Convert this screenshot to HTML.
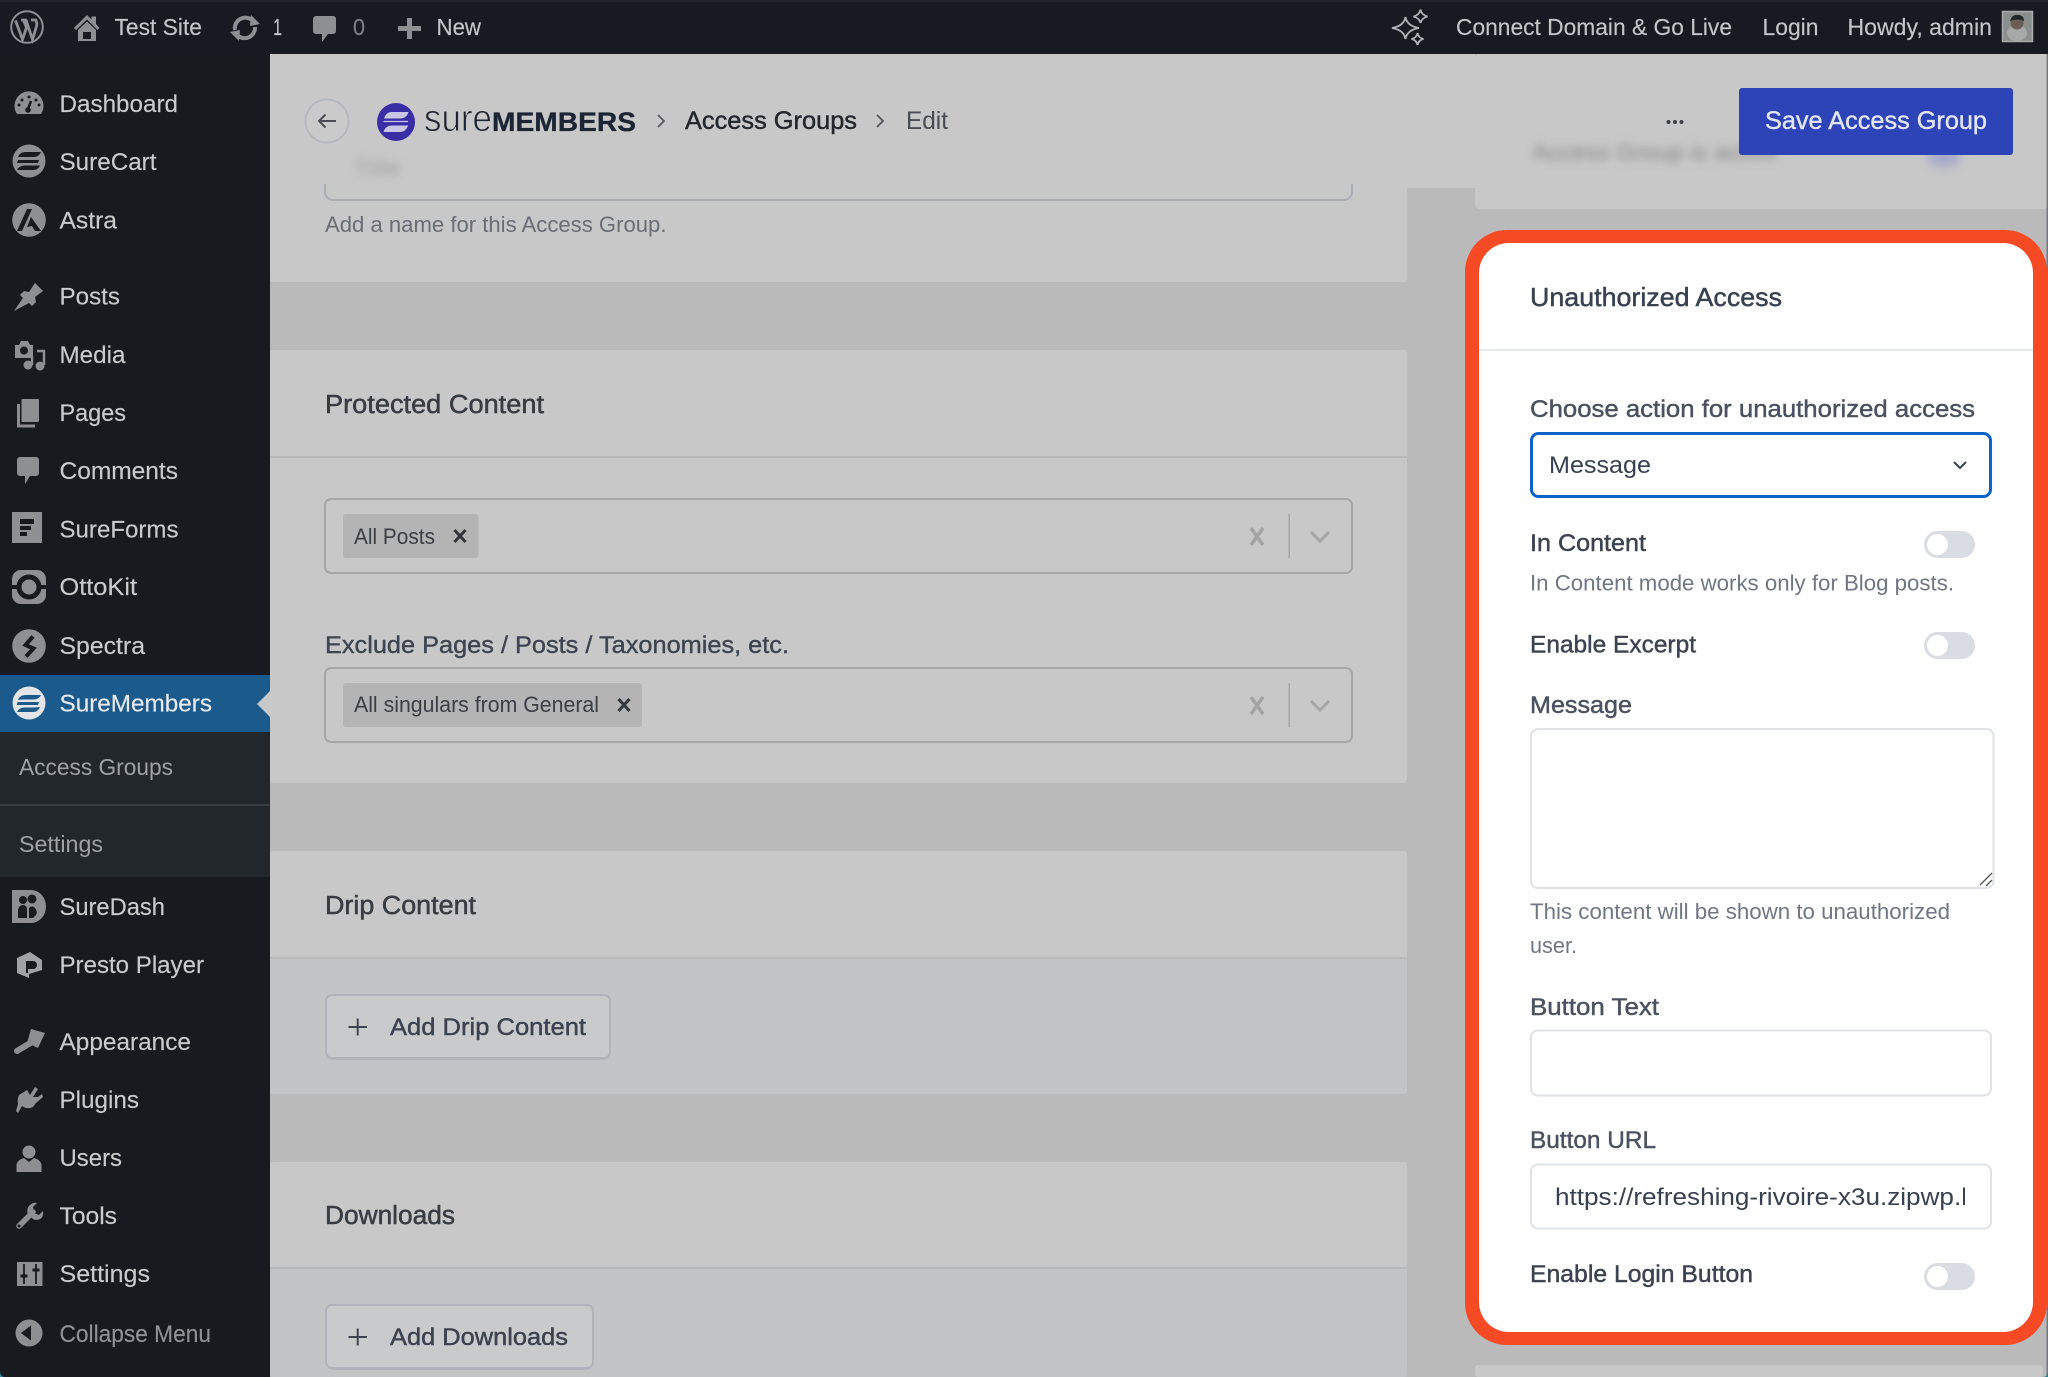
<!DOCTYPE html>
<html lang="en">
<head>
<meta charset="utf-8">
<title>SureMembers - Edit Access Group</title>
<style>
html,body{margin:0;padding:0;width:2048px;height:1377px;overflow:hidden;background:#bababa}
svg{display:block}
text{font-family:"Liberation Sans",Arial,sans-serif;white-space:pre}
.bar{font-size:23px;fill:#c3c5c7;stroke:#c3c5c7;stroke-width:.15}
.nav{font-size:24px;fill:#c9cacc;stroke:#c9cacc;stroke-width:.15}
.sub{font-size:23px;fill:#9fa2a5}
.ic{fill:#8d8f93}
.dk{fill:#171a1f}
.h{font-size:25.5px;fill:#383c43;stroke:#383c43;stroke-width:.5}
.help{font-size:22.5px;fill:#696d75}
.lab{font-size:24.5px;fill:#3d4552;stroke:#3d4552;stroke-width:.4}
.chip{font-size:22.5px;fill:#3b3e44}
.rl{font-size:24.5px;fill:#4a5261;stroke:#4a5261;stroke-width:.45}
.rt{font-size:24.5px;fill:#3c4350;stroke:#3c4350;stroke-width:.45}
.rh{font-size:22.5px;fill:#6f7684}
.in{fill:#fff;stroke:#dfe2e9;stroke-width:2}
.tg{fill:#d9dce3}
.kn{fill:#fff}
</style>
</head>
<body>
<svg xmlns="http://www.w3.org/2000/svg" width="2048" height="1377" viewBox="0 0 2048 1377">
<defs>
<filter id="b3" x="-30%" y="-150%" width="160%" height="400%"><feGaussianBlur stdDeviation="4.500"/></filter>
<filter id="b5" x="-50%" y="-100%" width="200%" height="300%"><feGaussianBlur stdDeviation="5"/></filter>
<clipPath id="urlclip"><rect x="1540" y="1170" width="425" height="50"/></clipPath>
</defs>

<!-- content background -->
<rect x="270" y="54" width="1778" height="1323" fill="#bababa"/>

<!-- right top card -->
<rect x="1475" y="54" width="573" height="155" rx="4" fill="#c8c8c8"/>
<text x="1532" y="160" font-size="23" fill="#848486" filter="url(#b3)" textLength="245" lengthAdjust="spacingAndGlyphs">Access Group is active</text>
<ellipse cx="1944" cy="158" rx="17" ry="9" fill="#a5a8c8" filter="url(#b5)"/>

<!-- left cards -->
<rect x="270" y="54" width="1137" height="228" rx="3" fill="#c8c8c8"/>
<rect x="270" y="350" width="1137" height="433" rx="3" fill="#c8c8c8"/>
<rect x="270" y="851" width="1137" height="243" rx="3" fill="#c3c4c6"/>
<path d="M270 958V854a3 3 0 0 1 3-3H1404a3 3 0 0 1 3 3V958Z" fill="#c8c8c8"/>
<rect x="270" y="1162" width="1137" height="215" rx="3" fill="#c3c4c6"/>
<path d="M270 1268V1165a3 3 0 0 1 3-3H1404a3 3 0 0 1 3 3V1268Z" fill="#c8c8c8"/>
<rect x="1475" y="1365" width="568" height="12" rx="3" fill="#c8c8c8"/>

<!-- card 1 -->
<rect x="270" y="54" width="1205" height="134" fill="#c8c8c8"/>
<text x="353" y="176" font-size="23" fill="#a0a0a2" filter="url(#b3)" textLength="48" lengthAdjust="spacingAndGlyphs">Title</text>
<path d="M325 184V192a8 8 0 0 0 8 8H1344a8 8 0 0 0 8-8V184" fill="none" stroke="#aaaeb6" stroke-width="2"/>
<text class="help" x="325" y="232" textLength="341.500" lengthAdjust="spacingAndGlyphs">Add a name for this Access Group.</text>

<!-- Protected content -->
<text class="h" x="325" y="413" textLength="219" lengthAdjust="spacingAndGlyphs">Protected Content</text>
<rect x="270" y="456" width="1137" height="2" fill="#b8b8b8"/>

<rect x="325" y="499" width="1027" height="74" rx="6" fill="none" stroke="#a6a6a6" stroke-width="2"/>
<rect x="343" y="514" width="135.500" height="44" rx="3" fill="#b4b4b4"/>
<text class="chip" x="354" y="544" textLength="81" lengthAdjust="spacingAndGlyphs">All Posts</text>
<path d="M454.500 530L465.500 542M465.500 530L454.500 542" stroke="#33363b" stroke-width="3" fill="none"/>
<path d="M1251 528L1263 545M1263 528L1251 545" stroke="#a3a3a3" stroke-width="3.500" fill="none"/>
<rect x="1288.500" y="514" width="1.500" height="44" fill="#a6a6a6"/>
<path d="M1311 532L1320 541L1329 532" stroke="#a5a5a5" stroke-width="3" fill="none"/>

<text class="lab" x="325" y="653" textLength="464" lengthAdjust="spacingAndGlyphs">Exclude Pages / Posts / Taxonomies, etc.</text>
<rect x="325" y="668" width="1027" height="74" rx="6" fill="none" stroke="#a6a6a6" stroke-width="2"/>
<rect x="343" y="683" width="299" height="44" rx="3" fill="#b4b4b4"/>
<text class="chip" x="354" y="712" textLength="245" lengthAdjust="spacingAndGlyphs">All singulars from General</text>
<path d="M618.500 699L629.500 711M629.500 699L618.500 711" stroke="#33363b" stroke-width="3" fill="none"/>
<path d="M1251 697L1263 714M1263 697L1251 714" stroke="#a3a3a3" stroke-width="3.500" fill="none"/>
<rect x="1288.500" y="683" width="1.500" height="44" fill="#a6a6a6"/>
<path d="M1311 701L1320 710L1329 701" stroke="#a5a5a5" stroke-width="3" fill="none"/>

<!-- Drip content -->
<text class="h" x="325" y="914" textLength="151" lengthAdjust="spacingAndGlyphs">Drip Content</text>
<rect x="270" y="957" width="1137" height="2" fill="#b9b9ba"/>
<rect x="326" y="997" width="284" height="63" rx="7" fill="#b2b4b9"/>
<rect x="326" y="995" width="284" height="63" rx="6" fill="#c9cacc" stroke="#b0b3ba" stroke-width="2"/>
<path d="M348.500 1027H367M357.700 1018.500V1035.500" stroke="#3f4652" stroke-width="2" fill="none"/>
<text class="rt" x="390" y="1035" textLength="196" lengthAdjust="spacingAndGlyphs">Add Drip Content</text>

<!-- Downloads -->
<text class="h" x="325" y="1224" textLength="130" lengthAdjust="spacingAndGlyphs">Downloads</text>
<rect x="270" y="1267" width="1137" height="2" fill="#b9b9ba"/>
<rect x="326" y="1307" width="267" height="63" rx="7" fill="#b2b4b9"/>
<rect x="326" y="1305" width="267" height="63" rx="6" fill="#c9cacc" stroke="#b0b3ba" stroke-width="2"/>
<path d="M348.500 1337H367M357.700 1328.500V1345.500" stroke="#3f4652" stroke-width="2" fill="none"/>
<text class="rt" x="390" y="1345" textLength="178" lengthAdjust="spacingAndGlyphs">Add Downloads</text>

<!-- header -->
<circle cx="327" cy="121" r="21.500" fill="#cacaca" stroke="#b5b8c0" stroke-width="2"/>
<path d="M336 121H319M325.500 114.500L319 121L325.500 127.500" stroke="#4a4d55" stroke-width="2" fill="none"/>
<circle cx="396" cy="122" r="19" fill="#3a2ea6"/>
<path d="M384 118.500Q386 112 392 112H408.500Q406.500 118.500 400 118.500Z" fill="#c9c6e6"/>
<path d="M408 125.500Q406 132 400 132H383.500Q385.500 125.500 392 125.500Z" fill="#c9c6e6"/>
<path d="M383.500 121.500H408" stroke="#c9c6e6" stroke-width="1.200"/>
<text x="424" y="131" font-size="38" fill="#1c2533" stroke="#c8c8c8" stroke-width=".9" textLength="68" lengthAdjust="spacingAndGlyphs">sure</text>
<text x="492" y="131" font-size="26.500" font-weight="700" fill="#1c2533" stroke="#1c2533" stroke-width=".3" textLength="144" lengthAdjust="spacingAndGlyphs">MEMBERS</text>
<path d="M658 115L664 121L658 127" stroke="#55585f" stroke-width="1.800" fill="none"/>
<text x="685" y="129" font-size="25" fill="#23272e" stroke="#23272e" stroke-width=".45" textLength="172" lengthAdjust="spacingAndGlyphs">Access Groups</text>
<path d="M877 115L883 121L877 127" stroke="#55585f" stroke-width="1.800" fill="none"/>
<text x="906" y="129" font-size="25" fill="#484b52" textLength="42" lengthAdjust="spacingAndGlyphs">Edit</text>
<circle cx="1668.500" cy="122" r="2" fill="#3d4047"/><circle cx="1675" cy="122" r="2" fill="#3d4047"/><circle cx="1681.500" cy="122" r="2" fill="#3d4047"/>
<rect x="1739" y="88" width="274" height="67" rx="3" fill="#2c44b8"/>
<text x="1765" y="129" font-size="25" fill="#e2e5f2" stroke="#e2e5f2" stroke-width=".4" textLength="222" lengthAdjust="spacingAndGlyphs">Save Access Group</text>

<!-- right edge -->
<rect x="2046.500" y="54" width="1.500" height="1323" fill="#777782"/>

<!-- highlighted panel -->
<rect x="1465" y="230" width="582" height="1115" rx="42" fill="#f64a25"/>
<rect x="1479" y="243" width="554" height="1089" rx="30" fill="#fff"/>
<text x="1530" y="306" font-size="26" fill="#374151" stroke="#374151" stroke-width=".45" textLength="252" lengthAdjust="spacingAndGlyphs">Unauthorized Access</text>
<rect x="1479" y="349" width="554" height="2" fill="#e5e7ee"/>

<text class="rl" x="1530" y="417" textLength="445" lengthAdjust="spacingAndGlyphs">Choose action for unauthorized access</text>
<rect x="1531.500" y="433.500" width="459" height="63" rx="7" fill="#fff" stroke="#0b62c9" stroke-width="3"/>
<text x="1549" y="473" font-size="24.500" fill="#374151" textLength="102" lengthAdjust="spacingAndGlyphs">Message</text>
<path d="M1954 462L1960 468L1966 462" stroke="#374151" stroke-width="2" fill="none"/>

<text class="rt" x="1530" y="551" textLength="116" lengthAdjust="spacingAndGlyphs">In Content</text>
<rect class="tg" x="1924" y="531" width="51" height="27" rx="13.500"/><circle class="kn" cx="1937.500" cy="544.500" r="10.500"/>
<text class="rh" x="1530" y="590.500" textLength="424" lengthAdjust="spacingAndGlyphs">In Content mode works only for Blog posts.</text>

<text class="rt" x="1530" y="652.500" textLength="166" lengthAdjust="spacingAndGlyphs">Enable Excerpt</text>
<rect class="tg" x="1924" y="632" width="51" height="27" rx="13.500"/><circle class="kn" cx="1937.500" cy="645.500" r="10.500"/>

<text class="rl" x="1530" y="713" textLength="102" lengthAdjust="spacingAndGlyphs">Message</text>
<rect class="in" x="1531" y="729" width="462.500" height="159" rx="7"/>
<path d="M1980 885L1992 873M1986 886L1992 880" stroke="#555" stroke-width="1.300" fill="none"/>
<text class="rh" x="1530" y="919" textLength="420" lengthAdjust="spacingAndGlyphs">This content will be shown to unauthorized</text>
<text class="rh" x="1530" y="953" textLength="47" lengthAdjust="spacingAndGlyphs">user.</text>

<text class="rl" x="1530" y="1015" textLength="129" lengthAdjust="spacingAndGlyphs">Button Text</text>
<rect class="in" x="1531" y="1030.500" width="460" height="65" rx="7"/>

<text class="rl" x="1530" y="1148" textLength="126" lengthAdjust="spacingAndGlyphs">Button URL</text>
<rect class="in" x="1531" y="1164.500" width="460" height="64" rx="7"/>
<g clip-path="url(#urlclip)"><text x="1555" y="1205" font-size="24.500" fill="#374151" textLength="412" lengthAdjust="spacingAndGlyphs">https://refreshing-rivoire-x3u.zipwp.l</text></g>

<text class="rt" x="1530" y="1282" textLength="223" lengthAdjust="spacingAndGlyphs">Enable Login Button</text>
<rect class="tg" x="1924" y="1263" width="51" height="27" rx="13.500"/><circle class="kn" cx="1937.500" cy="1276.500" r="10.500"/>

<!-- sidebar -->
<rect x="0" y="54" width="270" height="1323" fill="#171a1f"/>
<rect x="0" y="675" width="270" height="57" fill="#1a5a8c"/>
<path d="M270 691L257 704L270 717Z" fill="#c8c8c8"/>
<rect x="0" y="732" width="270" height="145" fill="#22272c"/>
<rect x="0" y="804" width="269" height="2" fill="#3a3e43"/>

<text class="nav" x="59.500" y="112" textLength="118.500" lengthAdjust="spacingAndGlyphs">Dashboard</text>
<text class="nav" x="59.500" y="170" textLength="97" lengthAdjust="spacingAndGlyphs">SureCart</text>
<text class="nav" x="59.500" y="228.500" textLength="57.500" lengthAdjust="spacingAndGlyphs">Astra</text>
<text class="nav" x="59.500" y="304.500" textLength="60.500" lengthAdjust="spacingAndGlyphs">Posts</text>
<text class="nav" x="59.500" y="363" textLength="66" lengthAdjust="spacingAndGlyphs">Media</text>
<text class="nav" x="59.500" y="421" textLength="66.500" lengthAdjust="spacingAndGlyphs">Pages</text>
<text class="nav" x="59.500" y="479" textLength="118.500" lengthAdjust="spacingAndGlyphs">Comments</text>
<text class="nav" x="59.500" y="537.500" textLength="119" lengthAdjust="spacingAndGlyphs">SureForms</text>
<text class="nav" x="59.500" y="595" textLength="77.500" lengthAdjust="spacingAndGlyphs">OttoKit</text>
<text class="nav" x="59.500" y="654" textLength="85.500" lengthAdjust="spacingAndGlyphs">Spectra</text>
<text class="nav" x="59.500" y="711.500" style="fill:#e8eaee;stroke:#e8eaee" textLength="152.500" lengthAdjust="spacingAndGlyphs">SureMembers</text>
<text class="sub" x="19" y="775" textLength="154" lengthAdjust="spacingAndGlyphs">Access Groups</text>
<text class="sub" x="19" y="852" textLength="84" lengthAdjust="spacingAndGlyphs">Settings</text>
<text class="nav" x="59.500" y="915" textLength="105.500" lengthAdjust="spacingAndGlyphs">SureDash</text>
<text class="nav" x="59.500" y="973" textLength="144.500" lengthAdjust="spacingAndGlyphs">Presto Player</text>
<text class="nav" x="59.500" y="1050" textLength="131.500" lengthAdjust="spacingAndGlyphs">Appearance</text>
<text class="nav" x="59.500" y="1108" textLength="79.500" lengthAdjust="spacingAndGlyphs">Plugins</text>
<text class="nav" x="59.500" y="1166" textLength="62.500" lengthAdjust="spacingAndGlyphs">Users</text>
<text class="nav" x="59.500" y="1224" textLength="57.500" lengthAdjust="spacingAndGlyphs">Tools</text>
<text class="nav" x="59.500" y="1282" textLength="90.500" lengthAdjust="spacingAndGlyphs">Settings</text>
<text class="nav" x="59.500" y="1342" style="fill:#8f9195;stroke:#8f9195" textLength="151.500" lengthAdjust="spacingAndGlyphs">Collapse Menu</text>

<!-- sidebar icons -->
<!-- dashboard -->
<path class="ic" d="M17 114A14.500 14.500 0 1 1 41 114Z"/>
<circle class="dk" cx="29" cy="97" r="1.500"/><circle class="dk" cx="22" cy="100" r="1.500"/><circle class="dk" cx="36" cy="100" r="1.500"/><circle class="dk" cx="19" cy="105" r="1.500"/><circle class="dk" cx="39" cy="105" r="1.500"/>
<path d="M31 101L28 109" stroke="#171a1f" stroke-width="2.500" fill="none"/><circle class="dk" cx="28" cy="110" r="2.800"/>
<!-- surecart -->
<circle class="ic" cx="29" cy="161" r="16.500"/>
<path class="dk" d="M18 157Q20 152 25 152H41Q39 157 33 157Z"/><path class="dk" d="M18 160H39L38 163H17Z"/><path class="dk" d="M40 165.500Q38 170 33 170H17Q19 165.500 25 165.500Z"/>
<!-- astra -->
<circle class="ic" cx="29" cy="220" r="16.800"/>
<path class="dk" d="M27 209L32 209L22 231L17 231Z"/><path class="dk" d="M31 217L41 231H35L32 226L27 227Z"/>
<!-- pin -->
<path class="ic" d="M14 311L23 298L20 295L24 291L29 292L35 283L43 291L35 297L36 302L32 306L29 303Z"/>
<!-- media -->
<path class="ic" d="M15 345H19L21 341H28L30 345H33V358H15Z"/><circle class="dk" cx="24" cy="350.500" r="4"/>
<path d="M37 351H44V365" stroke="#8d8f93" stroke-width="2.500" fill="none"/><circle class="ic" cx="28" cy="365" r="4.500"/><circle class="ic" cx="40" cy="366" r="4.500"/><path d="M32 365V356" stroke="#8d8f93" stroke-width="2.500"/>
<!-- pages -->
<rect class="ic" x="21.500" y="399" width="17.500" height="23" rx="1"/>
<path d="M18.500 404V426H35" stroke="#8d8f93" stroke-width="3" fill="none"/>
<!-- comments -->
<path class="ic" d="M20 457H36a3 3 0 0 1 3 3V473a3 3 0 0 1-3 3H30L25 484V476H20a3 3 0 0 1-3-3V460a3 3 0 0 1 3-3Z"/>
<!-- sureforms -->
<rect class="ic" x="12" y="512" width="30" height="31"/>
<path class="dk" d="M20 519H34V524H20ZM20 526H31V530H20ZM20 532H27V536H20Z"/>
<!-- ottokit -->
<rect class="ic" x="12" y="570" width="34" height="34" rx="9"/>
<circle cx="29" cy="587" r="10" fill="none" stroke="#171a1f" stroke-width="5"/>
<path d="M12 587H19M39 587H46" stroke="#171a1f" stroke-width="4"/>
<!-- spectra -->
<circle class="ic" cx="29" cy="646" r="16.800"/>
<path d="M33 636.500L25.500 645L33.500 648.500L26 656.500" stroke="#171a1f" stroke-width="4" fill="none"/>
<!-- suremembers -->
<circle cx="29" cy="703" r="16.500" fill="#e3e5e8"/>
<path d="M18 700Q20 695 25 695H41Q39 699.500 33 699.500H25Q21 699.500 18 700Z" fill="#1a5a8c"/>
<path d="M17.500 702H39L38 705H17Z" fill="#1a5a8c"/>
<path d="M40 707Q38 712 33 712H17Q19 707.500 25 707.500H33Z" fill="#1a5a8c"/>
<!-- suredash -->
<path class="ic" d="M12 890H31A15 16.500 0 0 1 46 906.500A15 16.500 0 0 1 31 923H12Z"/>
<circle class="dk" cx="23" cy="900" r="4"/><circle class="dk" cx="32" cy="899" r="4.500"/><path class="dk" d="M18 918V910Q19 905 23 905Q27 905 27 910V918Z"/><path class="dk" d="M29 918V908Q32 905 35 908Q38 912 36 915L33 918Z"/>
<!-- presto -->
<path fill="#a0a2a5" d="M17 958L30 952L42 960V970L29 974V978L17 973Z"/>
<path class="dk" d="M26 961H33A4 4 0 0 1 33 969H28V973H26Z"/>
<!-- appearance -->
<path class="ic" d="M31 1029L45 1033L38 1048L27 1043Z"/>
<path d="M32 1042L17 1051" stroke="#8d8f93" stroke-width="6" stroke-linecap="round" fill="none"/>
<!-- plugins -->
<path class="ic" d="M19 1095L27 1090L30 1095L35 1087L38 1089L33 1097L38 1097L42 1094L43 1097L36 1103L33 1107Q27 1110 22 1106L18 1113L16 1111L18 1104Q17 1099 19 1095Z"/>
<!-- users -->
<circle class="ic" cx="29" cy="1152" r="6.500"/>
<path class="ic" d="M16.500 1172V1165Q17 1160 24 1158L29 1162L34 1158Q41 1160 41.500 1165V1172Z"/>
<!-- tools -->
<path d="M19 1226L33 1212" stroke="#8d8f93" stroke-width="5.500" stroke-linecap="round" fill="none"/>
<path class="ic" d="M37 1203L33 1207L34 1213L39 1215L43 1211Q44 1217 40 1219Q36 1221 33 1219L28 1215Q26 1208 30 1205Q33 1202 37 1203Z"/>
<circle class="dk" cx="19" cy="1226" r="1.500"/>
<!-- settings -->
<rect class="ic" x="17" y="1262" width="25.500" height="24"/>
<path d="M24 1264V1284M36 1264V1284" stroke="#171a1f" stroke-width="1.800"/><path d="M20.500 1276H27.500M32.500 1270H39.500" stroke="#171a1f" stroke-width="3"/>
<!-- collapse -->
<circle class="ic" cx="29" cy="1333" r="13.500"/>
<path class="dk" d="M21 1333L31 1325.500V1340.500Z"/>

<!-- bottom window corners -->
<path d="M0 1372V1377H5Q1 1377 0 1372Z" fill="#2d7f92"/>
<path d="M2048 1372V1377H2043Q2047 1377 2048 1372Z" fill="#2d7f92"/>

<!-- admin bar -->
<rect x="0" y="0" width="2048" height="54" fill="#171a20"/>
<rect x="0" y="0" width="2048" height="2" fill="#22252a"/>
<!-- wp logo -->
<circle cx="27" cy="27" r="15.800" fill="none" stroke="#8d8f93" stroke-width="2"/>
<path d="M15.500 20.500L22.500 39.500L26.500 27.500L23.500 20M21 20H27M26 20L32.500 39.500L36 28Q38 23 35.500 20M31 20H37" fill="none" stroke="#8d8f93" stroke-width="2.800"/>
<!-- home -->
<path class="ic" d="M74 28L87 15L91.500 19.500V16.500H96V24L99.500 28L97.500 30L87 19.500L76 30Z"/>
<path class="ic" fill-rule="evenodd" d="M78 30L87 21.500L96 30V41H78ZM83 32V39H91V32Z"/>
<text class="bar" x="114.500" y="35" textLength="87.500" lengthAdjust="spacingAndGlyphs">Test Site</text>
<!-- updates -->
<path d="M235 30A10.500 10.500 0 0 1 253 21" fill="none" stroke="#8d8f93" stroke-width="4"/>
<path class="ic" d="M251 15L260 24L250 26Z"/>
<path d="M255 27A10.500 10.500 0 0 1 237 35" fill="none" stroke="#8d8f93" stroke-width="4"/>
<path class="ic" d="M239 41L230 32L240 30Z"/>
<text class="bar" x="273" y="35" textLength="9" lengthAdjust="spacingAndGlyphs">1</text>
<!-- comments -->
<path class="ic" d="M316 16H333a3 3 0 0 1 3 3V31a3 3 0 0 1-3 3H328L322 42V34H316a3 3 0 0 1-3-3V19a3 3 0 0 1 3-3Z"/>
<text class="bar" style="fill:#7e8084;stroke:#7e8084" x="353" y="35" textLength="12" lengthAdjust="spacingAndGlyphs">0</text>
<!-- plus -->
<path class="ic" d="M407 18H412V26H421V31H412V39H407V31H398V26H407Z"/>
<text class="bar" x="436.500" y="35" textLength="44.500" lengthAdjust="spacingAndGlyphs">New</text>
<!-- sparkles -->
<path d="M1405.500 17Q1407 26 1419 28Q1407 30 1405.500 39Q1404 30 1392 28Q1404 26 1405.500 17Z" fill="none" stroke="#b0b2b5" stroke-width="1.800"/>
<path d="M1420.500 9.500Q1421.500 15 1427.500 16.500Q1421.500 18 1420.500 23Q1419.500 18 1413.500 16.500Q1419.500 15 1420.500 9.500Z" fill="none" stroke="#b0b2b5" stroke-width="1.800"/>
<path d="M1417.500 33Q1418.500 38 1423.500 39Q1418.500 40 1417.500 45Q1416.500 40 1411.500 39Q1416.500 38 1417.500 33Z" fill="none" stroke="#b0b2b5" stroke-width="1.800"/>
<text class="bar" x="1456" y="35" textLength="276" lengthAdjust="spacingAndGlyphs">Connect Domain &amp; Go Live</text>
<text class="bar" x="1762.500" y="35" textLength="56" lengthAdjust="spacingAndGlyphs">Login</text>
<text class="bar" x="1847.500" y="35" textLength="144.500" lengthAdjust="spacingAndGlyphs">Howdy, admin</text>
<!-- avatar -->
<rect x="2002.500" y="11.500" width="30" height="30" fill="#8a8f8e" stroke="#a8aaab" stroke-width="1.500"/>
<ellipse cx="2017" cy="33" rx="10" ry="8" fill="#a7a9a8"/>
<circle cx="2017" cy="23" r="6.500" fill="#6b5d55"/>
<path d="M2010 21Q2012 14 2018 15Q2024 15 2024 21Q2018 18 2010 21Z" fill="#1f2a2c"/>
</svg>
</body>
</html>
